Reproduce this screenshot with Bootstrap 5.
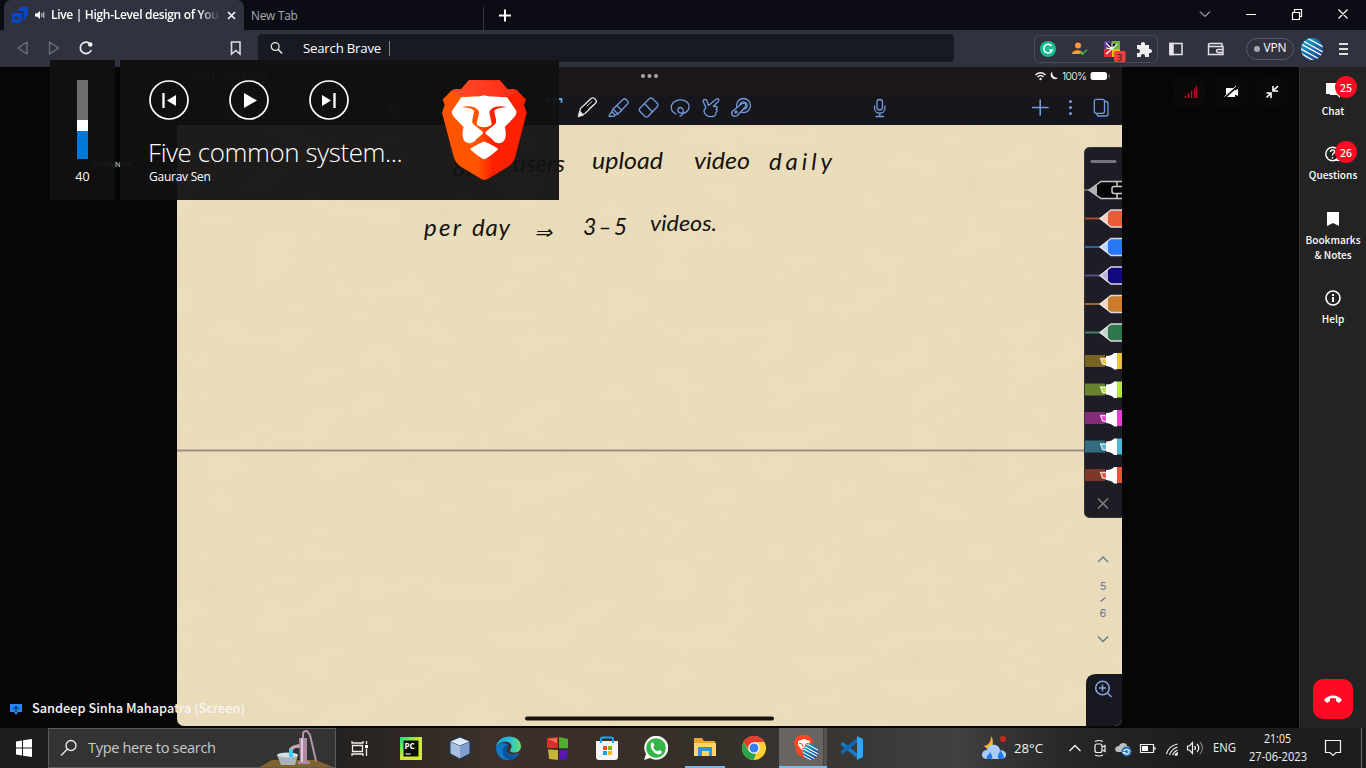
<!DOCTYPE html>
<html lang="en">
<head>
<meta charset="utf-8">
<meta name="viewport" content="width=device-width, initial-scale=1">
<title>Live | High-Level design</title>
<link href="https://cdn.jsdelivr.net/npm/bootstrap@5.3.0/dist/css/bootstrap.min.css" rel="stylesheet">
<style>
html,body{height:768px;overflow:hidden}
body{width:1366px;background:#000;color:#fff;font-family:"Open Sans","Noto Sans",sans-serif;font-size:12px;line-height:1.2}
svg{display:block;flex:none}
.tabstrip{height:30px;background:#0b0c14}
.tab-live{width:240px;margin-left:4px;background:#30333f;border-radius:7px 7px 0 0;padding-left:6px}
.tab-title{width:168px;margin-left:5px;font-weight:600;font-size:12px;letter-spacing:-.32px;overflow:hidden;white-space:nowrap;-webkit-mask-image:linear-gradient(90deg,#000 148px,transparent 169px);mask-image:linear-gradient(90deg,#000 148px,transparent 169px)}
.tab-new{width:232px;margin-left:7px;padding-bottom:3px;font-size:11.8px;color:#aaacb5;letter-spacing:-.2px}
.toolbar{height:37px;background:#30333f}
.address{width:696px;height:28px;background:#171a21;border-radius:4px;padding-left:12px;margin-left:14px;margin-top:-1px}
.address span{font-size:13.2px;letter-spacing:-.2px;margin-left:19px;border-right:1px solid #888;padding-right:8px;line-height:15px}
.extbox{width:124px;height:28px;border:1px solid #484b58;border-radius:5px;margin-left:80px}
.vpn{width:48px;height:22px;border:1px solid #565967;border-radius:11px;font-size:12px;letter-spacing:-.2px;margin-left:20px}
.vpn i{width:6px;height:6px;border-radius:50%;background:#a5a7b5}
.stage{width:1299px;background:#060606;border-radius:0 4px 4px 4px}
.share{width:945px;height:659px;margin-left:177px;background:#ebdebd;border-radius:0 0 7px 7px;overflow:hidden}
.side{width:67px;background:#232323;border-left:1px solid #333;font-family:"Noto Sans CJK SC",sans-serif;font-weight:500;font-size:10.1px;line-height:15px}
.side .entry{width:66px}
.badge-n{left:35px;width:22px;height:22px;border-radius:50%;background:#ff0a23;font-size:10.6px}
.hang{width:40px;height:40px;border-radius:10px;background:#ff0a23;margin-bottom:9px}
.presenter{left:9px;top:632px;font-family:"Noto Sans CJK SC",sans-serif;font-weight:500;font-size:12.75px;line-height:18px;color:#f6f6f6}
.code{left:93px;top:93px;font-size:7.5px;font-weight:700;color:#9a9a9a}
.ctl{top:9px;left:1174px}
.ctl span{width:32px;height:32px;border-radius:8px;background:#090909}
.osd{left:50px;top:60px;gap:5px}
.osd>div{height:140px;background:rgba(17,17,17,.947)}
.vol{width:65px;padding-top:20px}
.vol .bar{width:11px;height:79px}
.media{width:439px;padding:20px 0 0 29px}
.song{font-weight:300;font-size:25.9px;line-height:32px;margin:16px 0 0 -1px;letter-spacing:-.38px;width:270px;white-space:nowrap}
.artist{font-size:12px;line-height:16px;margin-top:1px;letter-spacing:-.25px}
.tray{height:40px;background:linear-gradient(90deg,#1d1d1d 0,#202020 320px,#2c2622 380px,#3b302a 480px,#3a2f28 600px,#34302a 720px,#3a3836 860px,#414140 960px,#333 1010px,#272727 1070px,#1e1e1e 1180px,#1c1c1c)}
.find{width:288px;height:40px;background:#333;border:1px solid #5b5b5b;font-size:14.6px;color:#c9c9c9}
.slot{width:49px;height:40px}
.on{border-bottom:2px solid #76b9ed;width:40px}
.act{width:48px;margin-left:3px;background:linear-gradient(90deg,#686462 44px,#444 44px,#444 45px,#55514f 45px);border-bottom:2px solid #76b9ed}
</style>
</head>
<body class="d-flex flex-column position-relative">
<header class="tabstrip d-flex">
  <div class="tab-live d-flex align-items-center">
    <svg width="20" height="18" viewBox="10 6 20 18"><path d="M17 11l4-4h7v8l-4.500 6V11z" fill="#0b46c8"/><path d="M12 13h10v7l-3 3h-7z" fill="#0b46c8"/><path d="M15 16.500h3.500v3.500H15z" fill="#30333f"/><path d="M16 12.300h7V20" fill="none" stroke="#1d2c5d" stroke-width=".7"/></svg>
    <svg class="ms-1" width="12" height="10" viewBox="0 0 12 10"><path d="M1 3.500h2L6 1v8L3 6.500H1z" fill="#fff"/><path d="M7.800 3v4M9.800 2v6" stroke="#ddd"/></svg>
    <span class="tab-title">Live | High-Level design of You</span>
    <svg class="ms-2" width="9" height="9" viewBox="0 0 9 9"><path d="M1 1l7 7M8 1L1 8" stroke="#fff" stroke-width="1.500"/></svg>
  </div>
  <div class="tab-new d-flex align-items-center mt-1">New Tab</div>
  <svg width="883" height="30" viewBox="483 0 883 30" fill="none" stroke="#fff"><path d="M483.500 7v23" stroke="#35363d" /><path d="M505 9.500v12M499 15.500h12" stroke-width="2"/><path d="M1200 11.500l5 5 5-5M1246 14.500h10"/><path d="M1292.500 12.500h7v7h-7zM1294.500 12v-2.500h7v7H1300M1338.500 9.500l9 9M1347.500 9.500l-9 9" stroke-width="1.200"/></svg>
</header>
<nav class="toolbar d-flex align-items-center">
  <svg width="244" height="37" viewBox="0 30 244 37" fill="none" stroke-width="1.300"><path d="M27 42v12l-9-6zM49.500 42v12l9-6z" stroke="#70737e" stroke-linejoin="round"/><path d="M89 43A5.700 5.700 0 1 0 91.300 50" stroke="#eee" stroke-width="1.700"/><circle cx="90.300" cy="44.500" r="2.200" fill="#fff"/><path d="M231.500 42h8.500v12l-4.200-3.500-4.300 3.500z" stroke="#dcdde2" stroke-width="1.600"/></svg>
  <div class="address d-flex align-items-center"><svg width="14" height="14" viewBox="0 0 14 14" fill="none" stroke="#e5e5e5" stroke-width="1.300"><circle cx="5.200" cy="5.500" r="3.900"/><path d="M8 8.300l4.200 4.200" stroke-width="1.600"/></svg><span>Search Brave</span></div>
  <div class="extbox d-flex align-items-center">
    <svg width="122" height="26" viewBox="1035 35 122 26"><circle cx="1048" cy="48" r="8" fill="#15bd8e"/><path d="M1051.500 45a4.300 4.300 0 1 0 .7 4h-3" fill="none" stroke="#fff" stroke-width="1.500"/><circle cx="1078" cy="44.500" r="3" fill="#ff9a3c"/><path d="M1072 53c0-5 11-5 11 0z" fill="#ff9a3c"/><path d="M1080 51l2.500 2.500 4.500-5" fill="none" stroke="#2bb24c" stroke-width="1.500"/><path d="M1104 40h8v8h-8z" fill="#5d3a8e"/><path d="M1112 40h8v8h-8z" fill="#6db33f"/><path d="M1104 48h8v8h-8z" fill="#e03036"/><path d="M1112 48h8v8h-8z" fill="#f0b820"/><path d="M1106 42l6 6 5-5M1112 48v-6M1112 48l-6 5M1112 48l-6-1" stroke="#fff" stroke-width="1.200"/><rect x="1114" y="50" width="11.500" height="11" rx="1.500" fill="#f0413f"/><text x="1117" y="59.500" font-size="9" fill="#111">3</text><path d="M1137 44h4c-1-4 5-4 4 0h4v4c4-1 4 5 0 4v4h-4c1-4-5-4-4 0h-4v-4c4 1 4-5 0-4z" fill="#eee"/></svg>
  </div>
  <svg class="ms-2" width="60" height="24" viewBox="1166 36 60 24" fill="none" stroke="#e4e4e8" stroke-width="1.500"><path d="M1170 42.500h12v11h-12z"/><path d="M1170 42.500h3v11h-3z" fill="#e4e4e8"/><path d="M1222 45v-2.500h-12c-2 0-2 3 0 3h13v8h-14.500v-10M1223 48.500h-5a1.500 1.500 0 0 0 0 3h5" stroke-width="1.400"/></svg>
  <div class="vpn d-flex align-items-center justify-content-center gap-1"><i></i>VPN</div>
  <svg class="ms-1" width="60" height="24" viewBox="1298 36 60 24"><defs><linearGradient id="av" x2="1" y2="1"><stop stop-color="#19b5c9"/><stop offset="1" stop-color="#1a2a8c"/></linearGradient><clipPath id="avc"><circle cx="1312" cy="48" r="11"/></clipPath></defs><g clip-path="url(#avc)"><path d="M1300 36h24v24h-24z" fill="url(#av)"/><path d="M1300 52l16 9M1299 47l22 12M1299 42l26 14M1303 40l22 12M1307 37l20 11" stroke="#fff" stroke-width="1.300"/></g><path d="M1339 43h9M1339 48h9M1339 53h9" stroke="#ddd" stroke-width="1.800"/></svg>
</nav>
<main class="d-flex flex-grow-1">
  <section class="stage position-relative">
    <div class="code position-absolute">DFMKNUR</div>
    <div class="share">
      <svg width="945" height="659" viewBox="177 67 945 659" font-family="Inter,sans-serif">
        <defs><filter id="grain" x="0" y="0" width="1" height="1"><feTurbulence type="fractalNoise" baseFrequency=".02 .04" numOctaves="5" seed="4"/><feColorMatrix values="0 0 0 0 .62 0 0 0 0 .48 0 0 0 0 .22 .5 0 0 0 -.14"/></filter></defs>
        <path d="M177 125h945v601H177z" filter="url(#grain)" opacity=".28"/>
        <path d="M177 67h945v58H177z" fill="#1b171a"/><path d="M177 96h945v29H177z" fill="#17161d"/><path d="M177 67h381v58H177z" fill="#0a0a0c"/>
        <path d="M177 450.500h907" stroke="#9d8e81" stroke-width="2"/>
        <text x="190" y="80" font-size="9.500" fill="#777">09:41&#160;&#160; Tue 9 Jan</text>
        <path d="M202 101l-7 7 7 7M388 107h7c6 0 6 9 0 9h-5M393 102l-6 5 6 5M227 105v13h13v-13zM233 98v12" stroke="#777" fill="none"/>
        <g fill="#aaa6a8"><circle cx="643" cy="76" r="2"/><circle cx="649.500" cy="76" r="2"/><circle cx="656" cy="76" r="2"/></g>
        <g fill="none" stroke="#729bd9" stroke-width="1.300" stroke-linejoin="round" stroke-linecap="round">
          <path d="M547 102v-3h14.500v3M554 100v16" stroke-width="1.800"/>
          <g stroke="#dadada"><path d="M578.500 116.500l2-8L591 98.500q2-1.500 4 .5l.8.800q1.500 1.800-.3 3.500L585 113.500z" fill="#08080a"/><path d="M587 106l5-4.500M589 108.500l5-4.500M585.500 104l5-4.500" stroke-width="1"/><path d="M578.500 116.500l1.300-5 3.500 3.500z" fill="#fff"/></g>
          <path d="M613 109l10-9.500q1.500-1.500 3 0l1.500 1.500q1.500 1.500 0 3l-9.500 10zM613 109l-1 2.800 3.200 3.200 3.300-1M611.500 112l-2.500 4.300h5l1-1.300M616.800 105.500l5 5"/>
          <path d="M640 108l9.500-9.500q1.500-1 3 0l5 5q1 1.500 0 3l-9.500 10q-1.500 1-3 0l-5-5q-1.500-1.500 0-3.500zM644.500 103.500l8 8.500"/>
          <path d="M676 114c-6.500-3-6-10-.5-12.800 6-3.200 14.500 0 13.500 6.300-1 6-6 6-8.500 5.500-4-1-3-5.500 0-5.500 4 0 3.500 8-.5 8.500"/>
          <path d="M706 108l-2.800-6.500q0-2 1.800-2t2 1.700l1.500 4.300 7.500-6.200q2-1.300 2.800.2.500 1-1 2.500l-4.500 4.300 3 .2q1.500.7.500 2l-.7.800q1.700.7.600 2.200l-.8.700q.8 4.500-5 4.500c-6-.3-9-6-4.900-8.700z"/>
          <circle cx="743.500" cy="105.500" r="7"/><circle cx="743.500" cy="105.500" r="3.700"/><path d="M742 103.500l-9.300 7.500q-2 2.200-.3 4.300 2 2 4.800.5l8.500-9.300q1-3.800-3.700-3z" fill="#17161d"/><circle cx="736" cy="112" r="1"/>
          <rect x="877" y="99.500" width="5.500" height="10.500" rx="2.750"/><path d="M874.500 106v2c0 7 10.500 7 10.500 0v-2M879.800 113.500v3M876 116.500h7.500"/>
          <path d="M1032.500 107.500h15.500M1040.200 100v15" stroke-width="1.600"/><path d="M1104.500 101.500h1.500q2 0 2 2v10.500q0 2-2 2h-7q-2 0-2-2"/><rect x="1094.300" y="99.300" width="10.200" height="14" rx="2"/>
        </g>
        <g fill="#729bd9"><circle cx="1070.500" cy="101.500" r="1.500"/><circle cx="1070.500" cy="107.500" r="1.500"/><circle cx="1070.500" cy="113.500" r="1.500"/></g>
        <path d="M1035.500 75q5-4.500 10 0M1037.500 77q3-3 6 0" stroke="#eee" fill="none" stroke-width="1.600"/><circle cx="1040.500" cy="79" r="1.200" fill="#eee"/><path d="M1052 71.500a4.300 4.300 0 1 0 6 6.500q-6 0-6-6.500z" fill="#eee"/><text x="1062" y="79.700" font-size="10.200" fill="#ddd" textLength="25">100%</text><rect x="1090.500" y="72" width="16.500" height="8" rx="2.500" fill="#fff"/><path d="M1109 74v4" stroke="#888"/>
        <!-- handwritten note -->
        <g fill="#17120e" font-family="Lato,sans-serif" font-style="italic" font-size="24">
          <text x="452" y="176">8M</text><text x="513" y="172" textLength="52" lengthAdjust="spacingAndGlyphs">users</text>
          <text x="592" y="169" textLength="71" lengthAdjust="spacingAndGlyphs">upload</text><text x="694" y="169" textLength="56" lengthAdjust="spacingAndGlyphs">video</text><text x="769" y="170" textLength="63" lengthAdjust="spacing">daily</text>
          <text x="424" y="236" textLength="37" lengthAdjust="spacing">per</text><text x="472" y="236" textLength="38" lengthAdjust="spacing">day</text><text x="534" y="239" font-size="19" textLength="18" lengthAdjust="spacingAndGlyphs">⇒</text><text x="583" y="235" font-size="23" textLength="44" lengthAdjust="spacing">3–5</text><text x="650" y="231" textLength="67" font-size="22" lengthAdjust="spacingAndGlyphs">videos.</text>
        </g>
        <!-- pen palette -->
        <rect x="1084.500" y="147.500" width="46" height="370" rx="5" fill="#1e1d25" stroke="#34333a"/>
        <path d="M1092 161.500h23" stroke="#77767c" stroke-width="3" stroke-linecap="round"/>
        <path d="M1084 190h6" stroke="#666" stroke-width="2"/><path d="M1089 190l12-8.500h22v17h-22z" fill="#050507" stroke="#c5c5c9" stroke-width="1.500"/><path d="M1089 190l8-5v10z" fill="#b0b0b5"/><path d="M1122 186.500h-8q-2 0-2 2v3q0 2 2 2h8M1117 182v4M1117 194v5" stroke="#ccc" fill="none" stroke-width="1.500"/>
        <defs><g id="pen"><path d="M0 0l11-8.500h13v17H11z" stroke="#d9d9df" stroke-width="1.400"/><path d="M0 0l8-6v12z" fill="#fff" fill-opacity=".7"/></g><g id="marker"><path d="M.5-2.500h6v6.500l-4-1z" stroke="#fff" stroke-opacity=".75" stroke-width="1.300"/><path d="M6-5q6 0 8-3h3V8.500h-3q-2-3-8-3.500z" fill="#fff"/><path d="M17-8h6V8h-6z"/></g></defs>
        <g stroke-width="2"><path d="M1085 218.500h16" stroke="#a84b32"/><path d="M1085 247h16" stroke="#2c659e"/><path d="M1085 275.500h16" stroke="#59508b"/><path d="M1085 304h16" stroke="#a26532"/><path d="M1085 332.500h16" stroke="#477e70"/></g>
        <use href="#pen" x="1100" y="218.500" fill="#ea5b38"/><use href="#pen" x="1100" y="247" fill="#2878f8"/><use href="#pen" x="1100" y="275.500" fill="#12077e"/><use href="#pen" x="1100" y="304" fill="#ca7b2c"/><use href="#pen" x="1100" y="332.500" fill="#2e764b"/>
        <path d="M1085 355h20v12h-20z" fill="#786322"/><path d="M1085 383.500h20v12h-20z" fill="#688330"/><path d="M1085 412h20v12h-20z" fill="#842b79"/><path d="M1085 440.500h20v12h-20z" fill="#326c7f"/><path d="M1085 469h20v12h-20z" fill="#7e362b"/>
        <use href="#marker" x="1100" y="361" fill="#eac13c"/><use href="#marker" x="1100" y="389.500" fill="#b5e63d"/><use href="#marker" x="1100" y="418" fill="#e43fd2"/><use href="#marker" x="1100" y="446.500" fill="#4eb5d5"/><use href="#marker" x="1100" y="475" fill="#e45338"/>
        <path d="M1098 498.500l10 10M1108 498.500l-10 10" stroke="#858185" stroke-width="1.500"/>
        <g stroke="#68798d" stroke-width="1.400" fill="none"><path d="M1098 562l5-5 5 5M1098 636.500l5 5 5-5M1100.500 601.500l5-4"/></g>
        <g fill="#67798e" font-size="11" text-anchor="middle"><text x="1103" y="590">5</text><text x="1103" y="617">6</text></g>
        <path d="M1086 726v-42q0-10 10-10h26v52z" fill="#171720"/><g stroke="#84a6df" fill="none" stroke-width="1.500"><circle cx="1102.500" cy="688" r="6.800"/><path d="M1107.500 693l4 4M1099 688h7M1102.500 684.500v7"/></g>
        <path d="M527 718.500h245" stroke="#171310" stroke-width="4" stroke-linecap="round"/>
      </svg>
    </div>
    <div class="ctl position-absolute d-flex" style="gap:9px">
      <span><svg width="32" height="32" viewBox="0 0 32 32"><path d="M11.500 22v-2M14.500 22v-4.500M17.500 22v-7M20.500 22v-9.500M22.500 22V10" stroke="#c10d20" stroke-width="1.500"/></svg></span>
      <span><svg width="32" height="32" viewBox="0 0 32 32"><path d="M11 12h9v2.500l3-1.500v7l-3-1.500V21h-9z" fill="#fff"/><path d="M10 21.500L22 10.500" stroke="#111" stroke-width="2"/><path d="M9.500 20.500L21 10" stroke="#ddd"/></svg></span>
      <span><svg width="32" height="32" viewBox="0 0 32 32" fill="none" stroke="#fff" stroke-width="1.600"><path d="M22 10l-4.500 4.500M17 10v5h5M10.500 21.500L15 17M10.500 17H15v5"/></svg></span>
    </div>
    <div class="presenter position-absolute d-flex align-items-center"><svg class="mt-1" width="13" height="12" viewBox="0 0 13 12"><path d="M1 0h12v8H8.500v2h-3V8H1z" fill="#2286ff"/><path d="M7 8V2.500M4.500 5L7 2.500 9.500 5" stroke="#06122a" fill="none"/></svg><span style="margin-left:10px">Sandeep Sinha Mahapatra (Screen)</span></div>
  </section>
  <aside class="side d-flex flex-column align-items-center text-center">
    <div class="entry position-relative" style="height:65px;padding-top:16px"><svg class="mx-auto" width="18" height="16" viewBox="0 0 18 16"><path d="M2 0h11v11H6l-3 0H2zM14 4h2v11l-3-3H6v-1h8z" fill="#fff"/></svg><span class="badge-n position-absolute d-flex align-items-center justify-content-center" style="top:9px">25</span><div style="margin-top:4px">Chat</div></div>
    <div class="entry position-relative" style="height:64px;padding-top:14px"><svg class="mx-auto" width="18" height="18" viewBox="0 0 18 18" fill="none" stroke="#fff" stroke-width="1.400"><circle cx="8.500" cy="8" r="6.700"/><path d="M6.500 6c0-3 4.500-2.500 4 0-.3 1.500-2 1.300-2 3.500M8.500 11v1.500M11 14l5 .5"/></svg><span class="badge-n position-absolute d-flex align-items-center justify-content-center" style="top:9px">26</span><div style="margin-top:3px">Questions</div></div>
    <div class="entry" style="height:79px;padding-top:16px"><svg class="mx-auto" width="12" height="14" viewBox="0 0 12 14"><path d="M0 0h12v14l-6-3-6 3z" fill="#fff"/></svg><div style="margin-top:6px">Bookmarks<br>&amp; Notes</div></div>
    <div class="entry" style="padding-top:15px"><svg class="mx-auto" width="16" height="16" viewBox="0 0 16 16" fill="none" stroke="#fff"><circle cx="8" cy="8" r="7" stroke-width="1.600"/><path d="M8 7v5M8 4v2" stroke-width="1.900"/></svg><div style="margin-top:5px">Help</div></div>
    <div class="hang mt-auto d-flex align-items-center justify-content-center"><svg width="20" height="12" viewBox="0 0 20 12"><path d="M1 7c4-6 14-6 18 0l-3 3-3-2V5.500q-3-1-6 0V8l-3 2z" fill="#fff"/></svg></div>
  </aside>
</main>
<footer class="tray d-flex align-items-center">
  <svg width="48" height="40" viewBox="0 728 48 40"><path d="M16 741.500l6-1v7h-6zM23 740.300l9-1.300v8.500h-9zM16 748.500h6v7l-6-1zM23 748.500h9v8.500l-9-1.300z" fill="#fff"/></svg>
  <div class="find d-flex align-items-center"><svg style="margin-left:11px" width="18" height="18" viewBox="0 0 18 18" fill="none" stroke="#eee" stroke-width="1.300"><circle cx="11" cy="6.500" r="5"/><path d="M7.500 10L1 16.500"/></svg><span style="margin-left:10px;letter-spacing:-.35px;white-space:nowrap">Type here to search</span>
    <svg class="ms-auto" width="77" height="38" viewBox="258 729 77 38"><path d="M258 768l14-8h44l19 8z" fill="#80632e"/><path d="M277 755h21l-3 10h-14z" fill="#a9b2b5"/><ellipse cx="287.500" cy="755" rx="10.500" ry="2.500" fill="#d1e0e4"/><path d="M289 749h4v8h-4z" fill="#35d2f6"/><path d="M289 749q2-4 11-5v4q-5-1-7 2z" fill="#c6a8bb"/><path d="M299 738h8v23h3v3h-12v-3h2z" fill="#ad8aa3"/><path d="M301 738h2v24h-2z" fill="#dec9d6"/><path d="M303 739v-5q0-3 4-3l3 4 6 26" fill="none" stroke="#b395a9" stroke-width="2"/></svg>
  </div>
  <div class="d-flex align-items-center justify-content-center" style="width:48px"><svg width="18" height="18" viewBox="0 0 18 18" fill="none" stroke="#eee" stroke-width="1.300"><path d="M1 2v2h11V2M1.500 6.500h10v6h-10zM1 17v-2h11v2M15.500 2v3M15.500 9.500V17"/><path d="M14 6h3v3h-3z" fill="#fff" stroke="none"/></svg></div>
  <div class="slot d-flex align-items-center justify-content-center"><svg class="ms-1" width="22" height="23" viewBox="0 0 22 23"><defs><linearGradient id="pc" x2="1" y2="1"><stop stop-color="#20d888"/><stop offset=".5" stop-color="#d4e83a"/></linearGradient></defs><path d="M0 0h22v23H0z" fill="url(#pc)"/><path d="M3.500 3.500h15v16h-15z" fill="#07100a"/><text x="4.500" y="11.500" font-size="8" font-weight="700" fill="#fff">PC</text><path d="M5.500 17h5" stroke="#ddd" stroke-width="1.300"/></svg></div>
  <div class="slot d-flex align-items-center justify-content-center"><svg class="ms-1" width="24" height="24" viewBox="0 0 24 24"><path d="M12 0l11 5v13l-11 6-11-6V5z" fill="#21344f"/><path d="M12 1.500l9.500 4-9.500 4-9.500-4z" fill="#dcecf1"/><path d="M2.500 6L12 10v12.500l-9.500-5z" fill="#a9bfe0"/><path d="M21.500 6L12 10v12.500l9.500-5z" fill="#7e9ed0"/></svg></div>
  <div class="slot d-flex align-items-center justify-content-center"><svg class="ms-1" width="25" height="25" viewBox="0 0 24 24"><defs><linearGradient id="eg" x2="1"><stop stop-color="#189ee0"/><stop offset=".6" stop-color="#29c4d1"/><stop offset="1" stop-color="#6de065"/></linearGradient></defs><path d="M0 11C1-3 24-3 24 10c0 6-7 7-10 5-2-2 1-2 1-5 0-6-12-6-15 1z" fill="url(#eg)"/><path d="M0 11C3 5 10 6 12 9c-4 3-1 10 5 9l5-2C17 27 0 25 0 11z" fill="#1079c8"/><path d="M8 10c-4 5 0 13 7 13 3-1 6-3 7-6-8 5-15-1-10-8-2-1-3 0-4 1z" fill="#0b529f"/></svg></div>
  <div class="slot d-flex align-items-center justify-content-center"><svg class="ms-1" width="23" height="25" viewBox="0 0 23 25"><path d="M1 2l11-1v12L1 12z" fill="#d92f25"/><path d="M13 1l9 2v10h-9z" fill="#52ac30"/><path d="M2 13l10 1v10L3 23z" fill="#c6b530"/><path d="M13 14h9l-1 9-8 1z" fill="#5717b5"/><path d="M2 3l9-1v5z" fill="#ff9b8a" opacity=".6"/><path d="M1 12.800h21M12.500 1v23" stroke="#222"/></svg></div>
  <div class="slot d-flex align-items-center justify-content-center"><svg class="ms-1" width="24" height="25" viewBox="0 0 24 25"><path d="M6 6V3q0-1.500 1.500-1.500h9Q18 1.500 18 3v3" fill="none" stroke="#1aa5e8" stroke-width="2"/><path d="M1 5h22v16q0 3-3 3H4q-3 0-3-3z" fill="#f4f5f7"/><path d="M8 10h4v4H8z" fill="#f25022"/><path d="M13 10h4v4h-4z" fill="#7fba00"/><path d="M8 15h4v4H8z" fill="#00a4ef"/><path d="M13 15h4v4h-4z" fill="#ffb900"/><path d="M6 7V4M18 7V4" stroke="#1aa5e8" stroke-width="2"/></svg></div>
  <div class="slot d-flex align-items-center justify-content-center"><svg class="ms-1" width="24" height="24" viewBox="0 0 24 24"><path d="M0 24l2-6A12 12 0 1 1 6 22z" fill="#f5f5f5"/><circle cx="12" cy="12" r="9.800" fill="#32b545"/><path d="M7 7q2-2 3 1l.5 1.500L9 11q1 3 4.500 4.500L15 14l3 1.500q0 3-4 3C9 17 5.500 11 7 7z" fill="#fff"/></svg></div>
  <div class="slot d-flex justify-content-center"><div class="on ms-1 d-flex align-items-center justify-content-center"><svg width="22" height="20" viewBox="0 0 22 20"><path d="M0 1h8l2 3h11v4H0z" fill="#e9a52d"/><path d="M0 6h22v13H0z" fill="#ffd56a"/><path d="M4 19v-9h14v9h-3v-5H8v5z" fill="#3b8fda"/></svg></div></div>
  <div class="slot d-flex align-items-center justify-content-center"><svg class="ms-1" width="24" height="24" viewBox="0 0 24 24"><circle cx="12" cy="12" r="12" fill="#ffcf37"/><path d="M1.600 6A12 12 0 0 1 22.400 6H12L7 14z" fill="#e63b30"/><path d="M1.600 6l5.500 9.500L14 18l-2.500 6A12 12 0 0 1 1.600 6z" fill="#29a34b"/><circle cx="12" cy="12" r="5.700" fill="#fff"/><circle cx="12" cy="12" r="4.500" fill="#377ff0"/></svg></div>
  <div class="slot act d-flex align-items-center justify-content-center"><svg class="ms-1" width="27" height="27" viewBox="0 0 27 27"><path d="M7 1h9l3 3 2 3-3 13-6 4-7-4L2 8l2-4z" fill="#ff4520"/><path d="M6 7l6-2 6 2-1 4-2 4-3 3-3-3-3-4z" fill="#fff"/><path d="M7 9l3 1 1 3M17 9l-3 1-1 3M10 15l2-1 2 1" stroke="#ff4520" fill="none"/><g transform="translate(18.500 18) scale(.72) translate(-1312 -48)"><g clip-path="url(#avc)"><path d="M1300 36h24v24h-24z" fill="url(#av)"/><path d="M1300 52l16 9M1299 47l22 12M1299 42l26 14M1303 40l22 12M1307 37l20 11" stroke="#fff" stroke-width="1.500"/></g></g></svg></div>
  <div class="slot d-flex align-items-center justify-content-center"><svg width="24" height="24" viewBox="0 0 24 24"><path d="M1 7l2-1 15 12v5L1 9z" fill="#167cc5"/><path d="M1 17l2 1L18 6V1L1 15z" fill="#0e68b2"/><path d="M17 0l6 3v18l-6 3z" fill="#30a6f2"/></svg></div>
  <svg class="ms-auto" width="490" height="40" viewBox="876 728 490 40" font-family="Open Sans,sans-serif" fill="none" stroke="#f2f2f2" stroke-width="1.200">
    <g stroke="none"><path d="M991 736q4 6 0 13-4 1-7-3 7-1 7-10z" fill="#f7b52c"/><path d="M986 759c-6-1-5-9 1-9 1-7 12-7 13 0 8 0 8 9 1 9z" fill="#a9cdf7"/><path d="M987 759c-1-3 2-4 3-7 2 3 4 7 0 7zM999 759c-3-4 1-5 1-9 3 4 6 9 1 9z" fill="#1d78ec"/><circle cx="1003" cy="739" r="3" fill="#c42b1c"/></g>
    <text x="1014" y="753" font-size="13.500" stroke="none" fill="#f2f2f2" textLength="29" lengthAdjust="spacingAndGlyphs">28°C</text>
    <path d="M1069.500 751l5.500-5.500 5.500 5.500" stroke-width="1.400"/>
    <rect x="1095" y="744" width="7" height="8.500" rx="2"/><path d="M1102.500 747l2.500-1.500v6l-2.500-1.500M1095 741.500q4-2 8 0M1095 755q4 2 8 0"/>
    <path d="M1118 752c-4 0-4-6 1-6 1-4 8-4 8 0 4 0 4 6 0 6z" fill="#bdbdbd" stroke="none"/><circle cx="1126.500" cy="751.500" r="5" fill="#2075c3" stroke="none"/><path d="M1123.500 751q3-3.500 6 0h-2M1129.500 752.500q-3 3-6 0h2"/>
    <path d="M1140.500 744.500h13v8h-13zM1155 747v3"/><path d="M1142 746h6v5h-6z" fill="#fff" stroke="none"/>
    <path d="M1166.500 754q2-8 11-10M1169.500 755q2-6 8-8M1172.500 755q2-4 5-5M1175 755.500q1-2 3-3"/><circle cx="1176.500" cy="754.500" r="1.300" fill="#fff" stroke="none"/>
    <path d="M1187.500 746h2l3-3.500v11l-3-3.500h-2zM1194.500 746q2 2 0 4M1197 744q3.500 4 0 8"/><path d="M1200 742q5 6 0 12" stroke="#777"/>
    <text x="1213" y="752" font-size="12" stroke="none" fill="#f2f2f2" textLength="23" lengthAdjust="spacingAndGlyphs">ENG</text>
    <g stroke="none" fill="#f2f2f2" font-size="12"><text x="1264" y="743" textLength="27" lengthAdjust="spacingAndGlyphs">21:05</text><text x="1249" y="761" textLength="58" lengthAdjust="spacingAndGlyphs">27-06-2023</text></g>
    <path d="M1325.500 740.500h15v12h-4.500l-3 3-3-3h-4.500z"/><path d="M1361.500 728v40" stroke="#666"/>
  </svg>
</footer>
<div class="osd position-absolute d-flex">
  <div class="vol d-flex flex-column align-items-center"><div class="bar"><div style="height:40px;background:#6e6e6e"></div><div style="height:11px;background:#fff"></div><div style="height:28px;background:#0078d7"></div></div><span style="margin-top:10px;font-size:12.500px">40</span></div>
  <div class="media position-relative">
    <svg width="200" height="40" viewBox="149 80 200 40" fill="none" stroke="#fff" stroke-width="1.700"><circle cx="169" cy="100" r="19"/><circle cx="249" cy="100" r="19"/><circle cx="329" cy="100" r="19"/><path d="M163.500 93v15M334.500 93v15" stroke-width="2.300"/><path d="M176 95v11l-9-5.500zM244 93v15l13-7.500zM322 95v11l9-5.500z" fill="#fff" stroke="none"/></svg>
    <div class="song">Five common system...</div><div class="artist">Gaurav Sen</div>
    <svg class="position-absolute" style="left:322px;top:20px" width="85" height="100" viewBox="1182 60 256 300"><defs><linearGradient id="lion" gradientUnits="userSpaceOnUse" x1="1182" x2="1438" y1="0" y2="0"><stop offset=".42" stop-color="#ff5500"/><stop offset=".6" stop-color="#ff2000"/></linearGradient><linearGradient id="mane"><stop stop-color="#ff4c2c"/><stop offset="1" stop-color="#ff2a12"/></linearGradient></defs><path d="M1263 60h93l24 28q22-5 32 7l23 23-6 17 8 23-34 132q-4 18-22 31l-60 36q-11 7-22 0l-60-36q-18-13-22-31l-35-132 8-23-6-17 23-23q10-12 32-7z" fill="url(#lion)"/><path d="M1263 60h93l24 28q22-5 32 7l-30 13h-144l-28-15q10-8 29-5z" fill="url(#mane)"/><path d="M1309 105q-15 5-30 4l-39 2-28 42q-2 11 8 20l27 28q-7 22 1 40 9 15 29 5l24-18q7-5 8-8 2 4 8 8l24 18q20 10 29-5 8-18 1-40l27-28q10-9 8-20l-28-42-39-2q-15 1-30-4z" fill="#fff"/><path d="M1241 141q32-7 48 7 6 4 4 12l-6 28q-2 8 8 11 14 6 28 0 10-3 8-11l-6-28q-2-8 4-12 16-14 48-7-24 2-35 8-4 3-2 8l5 24q2 8-6 14l-24 19q-5 4 0 9l22 18h-5l-23-14-23 14h-5l22-18q5-5 0-9l-24-19q-8-6-6-14l5-24q2-5-2-8-11-6-35-8z" fill="url(#lion)"/><path d="M1309 245q9 3 39 19 5 3 0 7-18 16-33 25-6 4-12 0-16-10-33-25-5-4 0-7 30-16 39-19z" fill="#fff"/></svg>
  </div>
</div>
</body>
</html>
